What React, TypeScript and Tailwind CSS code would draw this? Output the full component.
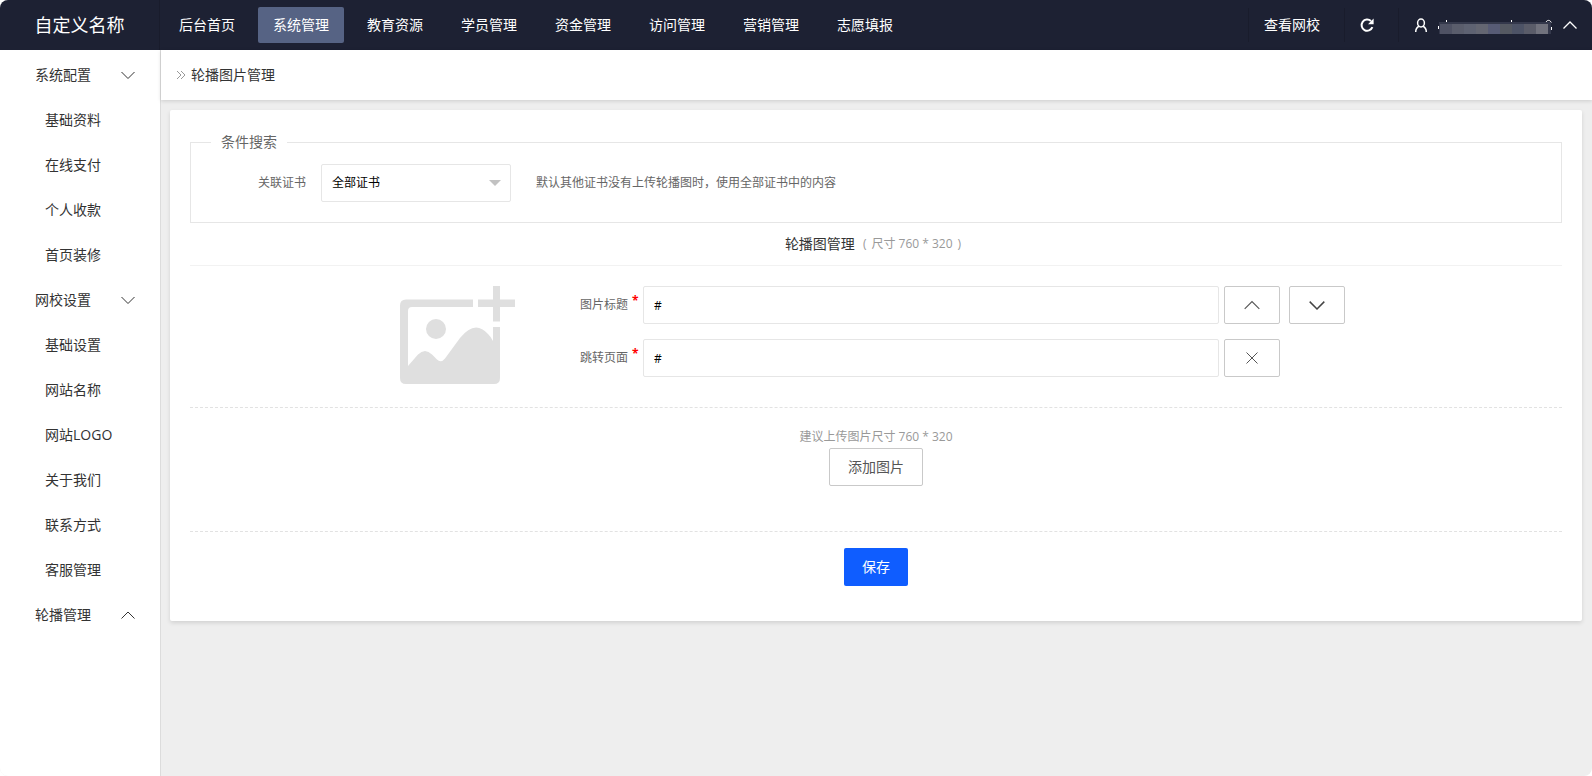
import type { ReactNode } from "react";

const navItems = [
	"后台首页",
	"系统管理",
	"教育资源",
	"学员管理",
	"资金管理",
	"访问管理",
	"营销管理",
	"志愿填报",
];

interface MenuGroup {
	title: string;
	open: boolean;
	items: string[];
}

const menu: MenuGroup[] = [
	{
		title: "系统配置",
		open: false,
		items: ["基础资料", "在线支付", "个人收款", "首页装修"],
	},
	{
		title: "网校设置",
		open: false,
		items: ["基础设置", "网站名称", "网站LOGO", "关于我们", "联系方式", "客服管理"],
	},
	{ title: "轮播管理", open: true, items: [] },
];

const maskColors = [
	"#4f5264",
	"#5a5d6c",
	"#5e6272",
	"#646672",
	"#575b75",
	"#555962",
	"#4d5366",
	"#5a5c69",
	"#71727d",
];

function Chevron({ up = false, className = "h-4 w-4" }: { up?: boolean; className?: string }) {
	return (
		<svg
			viewBox="0 0 16 16"
			className={`shrink-0 ${className}`}
			fill="none"
			stroke="currentColor"
			aria-hidden="true"
		>
			<path d={up ? "M1.5 11.5 8 5l6.5 6.5" : "M1.5 5 8 11.5 14.5 5"} />
		</svg>
	);
}

function RefreshIcon() {
	return (
		<svg viewBox="0 0 16 16" className="h-4 w-4" fill="none" aria-hidden="true">
			<path d="M13.4 10.2A5.6 5.6 0 1 1 12 4" stroke="currentColor" strokeWidth="2" />
			<path d="M14.6 1.6v5.6H9z" fill="currentColor" />
		</svg>
	);
}

function UserIcon() {
	return (
		<svg
			viewBox="0 0 16 16"
			className="h-4 w-4"
			fill="none"
			stroke="currentColor"
			strokeWidth="1.5"
			aria-hidden="true"
		>
			<ellipse cx="8" cy="6" rx="3.4" ry="3.9" />
			<path d="M2.700 15c0-2.900 1.500-4.800 3.400-5.700M13.300 15c0-2.900-1.500-4.800-3.400-5.700" />
		</svg>
	);
}

function MaskedName() {
	return (
		<svg viewBox="0 0 114 18" className="h-[18px] w-[114px]" aria-hidden="true">
			<path d="M8.500 4v3M73.500 4v3M.5 10v3" stroke="#fff" />
			<path d="M108 7c0-3.500 5-3.500 5 0M113.500 11v3" stroke="#fff" fill="none" />
			<rect x="1" y="6" width="112" height="12" fill="#34384b" />
			{maskColors.map((color, i) => (
				<rect key={i} x={2 + i * 12} y="8" width="12" height="10" fill={color} />
			))}
		</svg>
	);
}

function AddImageIcon() {
	return (
		<svg viewBox="0 0 115 98" className="h-[98px] w-[115px]" fill="#dfdfdf" aria-hidden="true">
			<path d="M93 0h7v13.500h15v7.500h-15v14.500h-7V21H78v-7.500h15z" />
			<path d="M6 13.500h67V21H12q-4 0-4 4v55l10-11.500q7-7 14 0l5 5q4 4 8-1L60 52q15-19 28-4 3 3 5 7V41h7v51q0 6-6 6H6q-6 0-6-6V19.500q0-6 6-6z" />
			<circle cx="36" cy="43" r="10" />
		</svg>
	);
}

function FieldRow({ id, label, children }: { id: string; label: string; children: ReactNode }) {
	return (
		<div className="flex items-center">
			<label htmlFor={id} className="flex w-[63px] shrink-0 gap-1 text-xs text-[#666]">
				{label}
				<span className="-mt-1 font-bold text-[#f00]">*</span>
			</label>
			<input
				id={id}
				type="text"
				defaultValue="#"
				className="h-[38px] min-w-0 grow rounded-xs border border-[#e6e6e6] px-2.5 text-xs text-black"
			/>
			<div className="ml-[5px] flex w-[121px] shrink-0 gap-[9px]">{children}</div>
		</div>
	);
}

function IconButton({ label, children }: { label: string; children: ReactNode }) {
	return (
		<button
			type="button"
			aria-label={label}
			className="flex h-[38px] w-14 items-center justify-center rounded-xs border border-[#c9c9c9] bg-white text-[#555]"
		>
			{children}
		</button>
	);
}

function Header() {
	return (
		<header className="flex h-[50px] shrink-0 bg-[#1d2133] text-sm text-white">
			<div className="flex w-40 shrink-0 items-center justify-center border-r border-[#191c2c] text-lg">
				自定义名称
			</div>
			<nav className="flex grow items-center gap-2 pl-1">
				{navItems.map((item) => (
					<a
						key={item}
						href="#"
						className={`flex h-9 items-center rounded-xs px-[15px] ${
							item === "系统管理" ? "bg-[#566384]" : ""
						}`}
					>
						{item}
					</a>
				))}
			</nav>
			<div className="flex items-center">
				<a href="#" className="flex h-[34px] w-24 items-center border-l border-[#191c2c] pl-[15px]">
					查看网校
				</a>
				<button
					type="button"
					aria-label="刷新"
					className="flex h-[34px] w-[54px] items-center border-l border-[#191c2c] pl-[14px]"
				>
					<RefreshIcon />
				</button>
				<button
					type="button"
					aria-label="账号"
					className="flex h-[34px] items-center border-l border-[#191c2c] pr-3.5 pl-3.5"
				>
					<UserIcon />
					<span className="ml-[9px]">
						<MaskedName />
					</span>
					<Chevron up className="ml-2.5 h-4 w-4 stroke-[1.3]" />
				</button>
			</div>
		</header>
	);
}

function Sidebar() {
	return (
		<aside className="w-40 shrink-0 bg-white pt-0.5 text-sm text-[#333]">
			{menu.map((group) => (
				<div key={group.title}>
					<button
						type="button"
						className="flex h-[45px] w-full items-center justify-between pr-6 pl-[35px]"
					>
						{group.title}
						<Chevron up={group.open} />
					</button>
					{group.items.map((item) => (
						<a key={item} href="#" className="flex h-[45px] items-center pl-[45px]">
							{item}
						</a>
					))}
				</div>
			))}
		</aside>
	);
}

export default function App() {
	return (
		<div className="flex min-h-screen flex-col overflow-hidden rounded-lg bg-[#eee] font-['Open_Sans','Noto_Sans_CJK_SC',sans-serif]">
			<Header />
			<div className="flex grow">
				<Sidebar />
				<main className="min-w-0 grow border-l border-[#dcdcdc]">
					<div className="flex h-[50px] items-center bg-white px-[15px] text-sm text-[#333] shadow-[0_1px_4px_rgba(0,0,0,0.15)]">
						<svg viewBox="0 0 10 10" className="mr-[5px] h-2.5 w-2.5" fill="none" stroke="#999" aria-hidden="true">
							<path d="M1 1l4 4-4 4M5 1l4 4-4 4" />
						</svg>
						<h1>轮播图片管理</h1>
					</div>
					<form className="mt-2.5 mr-2.5 ml-[9px] rounded-xs bg-white px-5 pt-6 pb-[35px] shadow-[0_2px_4px_rgba(0,0,0,0.12)]">
						<fieldset className="border border-[#e6e6e6] pb-5">
							<legend className="ml-5 px-2.5 text-sm leading-4 text-[#666]">条件搜索</legend>
							<div className="flex items-center pt-3.5 pl-[67px] text-xs text-[#666]">
								<label htmlFor="certificate">关联证书</label>
								<div className="relative ml-[15px]">
									<select
										id="certificate"
										className="h-[38px] w-[190px] appearance-none rounded-xs border border-[#e6e6e6] bg-white px-2.5 text-xs text-black"
									>
										<option>全部证书</option>
									</select>
									<svg
										viewBox="0 0 12 6"
										className="pointer-events-none absolute top-4 right-2.5 h-1.5 w-3"
										fill="#c2c2c2"
										aria-hidden="true"
									>
										<path d="M0 0h12L6 6z" />
									</svg>
								</div>
								<p className="ml-[25px]">默认其他证书没有上传轮播图时，使用全部证书中的内容</p>
							</div>
						</fieldset>
						<div className="flex h-[43px] items-center justify-center gap-2 border-b border-[#f2f2f2] pr-1.5">
							<h2 className="text-sm text-[#333]">轮播图管理</h2>
							<p className="flex gap-[5px] text-xs text-[#999]">
								<span>(</span>
								<span>尺寸 760 * 320</span>
								<span>)</span>
							</p>
						</div>
						<div className="flex border-b border-dashed border-[#e2e2e2] pt-5 pr-[217px] pb-[23px] pl-[210px]">
							<button type="button" aria-label="上传图片" className="mr-[65px] shrink-0">
								<AddImageIcon />
							</button>
							<div className="flex grow flex-col gap-[15px]">
								<FieldRow id="image-title" label="图片标题">
									<IconButton label="上移">
										<Chevron up className="h-[18px] w-[18px]" />
									</IconButton>
									<IconButton label="下移">
										<Chevron className="h-[18px] w-[18px] stroke-[1.3] text-[#444]" />
									</IconButton>
								</FieldRow>
								<FieldRow id="image-link" label="跳转页面">
									<IconButton label="删除">
										<svg viewBox="0 0 16 16" className="h-4 w-4" stroke="currentColor" aria-hidden="true">
											<path d="M2.500 2.500l11 11M13.500 2.500l-11 11" />
										</svg>
									</IconButton>
								</FieldRow>
							</div>
						</div>
						<div className="flex flex-col items-center border-b border-dashed border-[#e2e2e2] pt-5 pb-[45px]">
							<p className="mb-0.5 text-xs leading-[18px] text-[#999]">建议上传图片尺寸 760 * 320</p>
							<button
								type="button"
								className="h-[38px] rounded-xs border border-[#c9c9c9] bg-white px-[18px] text-sm text-[#555]"
							>
								添加图片
							</button>
						</div>
						<div className="flex justify-center pt-4">
							<button type="submit" className="h-[38px] rounded-xs bg-[#0f5dff] px-[18px] text-sm text-white">
								保存
							</button>
						</div>
					</form>
				</main>
			</div>
		</div>
	);
}
